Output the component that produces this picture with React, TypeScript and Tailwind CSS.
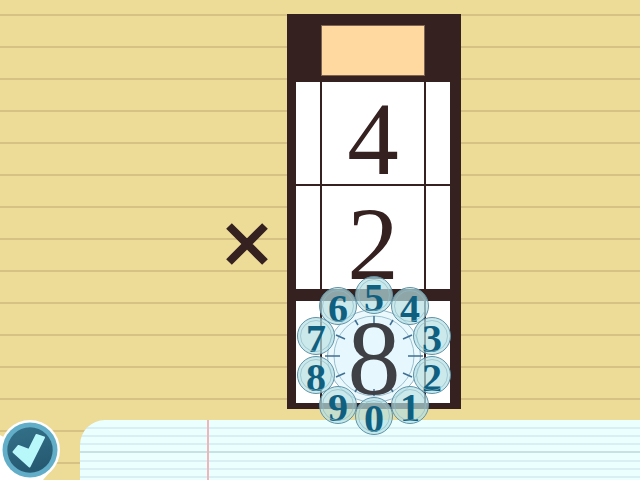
const bubbles = [
  { digit: 5, left: "left-[68px]", top: "top-[-2px]" },
  { digit: 4, left: "left-[104px]", top: "top-[9px]" },
  { digit: 3, left: "left-[126px]", top: "top-[39px]" },
  { digit: 2, left: "left-[126px]", top: "top-[78px]" },
  { digit: 1, left: "left-[104px]", top: "top-[108px]" },
  { digit: 0, left: "left-[68px]", top: "top-[119px]" },
  { digit: 9, left: "left-[32px]", top: "top-[108px]" },
  { digit: 8, left: "left-[10px]", top: "top-[78px]" },
  { digit: 7, left: "left-[10px]", top: "top-[39px]" },
  { digit: 6, left: "left-[32px]", top: "top-[9px]" },
];

const ticks = [
  "M0 -40V-33", "M19 -36L16 -31", "M38 -21L29 -17", "M49 0H34", "M38 21L29 17",
  "M19 36L16 31", "M0 40V33", "M-19 36L-16 31", "M-38 21L-29 17", "M-49 0H-34", "M-38 -21L-29 -17", "M-19 -36L-16 -31",
];

function Cell({ digit, className }: { digit?: string; className: string }) {
  return (
    <div className={`flex items-center justify-center bg-white pt-[12px] font-['Liberation_Serif',serif] text-[103px] leading-[80px] text-[#35211f] ${className}`}>
      {digit}
    </div>
  );
}

function Row({ digit, className }: { digit?: string; className: string }) {
  return (
    <div className={`flex gap-[2px] ${className}`}>
      <Cell className="w-[24px]" />
      <Cell digit={digit} className="w-[102px]" />
      <Cell className="w-[24px]" />
    </div>
  );
}

function Dial() {
  return (
    <div className="absolute left-[287px] top-[278px] w-[174px] h-[159px]">
      <div className="absolute left-[40px] top-[31px] w-[94px] h-[94px] rounded-full bg-[#e6f8fd]/80 border border-[#8fb6c8]" />
      <svg className="absolute left-[0px] top-[0px]" width="174" height="159" viewBox="-87 -78 174 159">
        <circle cx="0" cy="0" r="40" fill="#e6f8fd" stroke="#9cc0d0" strokeWidth="1" />
        {ticks.map((d) => (
          <path key={d} d={d} stroke="#3f6f95" strokeWidth="1.5" fill="none" />
        ))}
      </svg>
      <div className="absolute left-[40px] top-[34px] w-[94px] h-[94px] flex items-center justify-center font-['Liberation_Serif',serif] text-[106px] leading-none text-[#3f4046]">
        8
      </div>
      {bubbles.map((b) => (
        <div
          key={b.digit}
          className={`absolute ${b.left} ${b.top} w-[38px] h-[38px] rounded-full bg-[#b5dfe3]/70 border-[1.5px] border-[#5e93aa] flex items-center justify-center pt-[6px] font-['Liberation_Serif',serif] font-bold text-[40px] leading-[30px] text-[#0f6080]`}
        >
          <div className="absolute inset-[2px] rounded-full border border-[#8dbccb]/70" />
          {b.digit}
        </div>
      ))}
    </div>
  );
}

export default function App() {
  return (
    <div className="relative w-[640px] h-[480px] overflow-hidden bg-[#eddb98] bg-[repeating-linear-gradient(to_bottom,transparent_0px,transparent_14px,#d6c283_14px,#d6c283_16px,transparent_16px,transparent_32px)]">
      <div className="flex items-start h-[420px] pt-[14px] pl-[225px]">
        <div className="w-[62px] pt-[208px]">
          <svg width="44" height="44" viewBox="0 0 44 44" className="block">
            <path d="M4 4L40 40M40 4L4 40" stroke="#35211f" strokeWidth="8" />
          </svg>
        </div>
        <div className="w-[174px] h-[395px] bg-[#35211f] pt-[11px] pl-[9px] flex flex-col">
          <div className="ml-[25px] w-[104px] h-[51px] bg-[#ffd9a0] border border-[#7d6350]" />
          <Row digit="4" className="mt-[6px] h-[102px]" />
          <Row digit="2" className="mt-[2px] h-[103px]" />
          <Row className="mt-[12px] h-[102px]" />
        </div>
      </div>
      <div className="relative ml-[80px] h-[60px] rounded-tl-[25px] bg-[#ebffff] bg-[repeating-linear-gradient(to_bottom,transparent_0px,transparent_7px,#d8f0f4_7px,#d8f0f4_9px,transparent_9px,transparent_15px,#d8f0f4_15px,#d8f0f4_17px,transparent_17px,transparent_23px,#d8f0f4_23px,#d8f0f4_25px,transparent_25px,transparent_31px,#c8e2e4_31px,#c8e2e4_33px)]">
        <div className="absolute left-[127px] top-0 bottom-0 w-[2px] bg-[#eeb6bb]" />
      </div>
      <Dial />
      <button className="absolute left-0 top-[420px] w-[60px] h-[60px]">
        <svg width="60" height="60" viewBox="0 0 60 60" className="block">
          <defs>
            <linearGradient id="checkFill" x1="0" y1="0" x2="0.3" y2="1">
              <stop offset="0" stopColor="#34718a" />
              <stop offset="1" stopColor="#265a72" />
            </linearGradient>
          </defs>
          <polygon points="0,15 0,60 43,60 55,46" fill="#ffffff" />
          <circle cx="30" cy="30" r="30" fill="#ffffff" />
          <circle cx="30" cy="30" r="27.5" fill="#62aec8" />
          <circle cx="30" cy="30" r="22.7" fill="url(#checkFill)" />
          <polygon
            points="18.5,26 13.5,32 29.5,46.5 44,17.5 36.5,15 29,30"
            fill="#b8f8fb"
            stroke="#b8f8fb"
            strokeWidth="2"
            strokeLinejoin="round"
          />
        </svg>
      </button>
    </div>
  );
}
